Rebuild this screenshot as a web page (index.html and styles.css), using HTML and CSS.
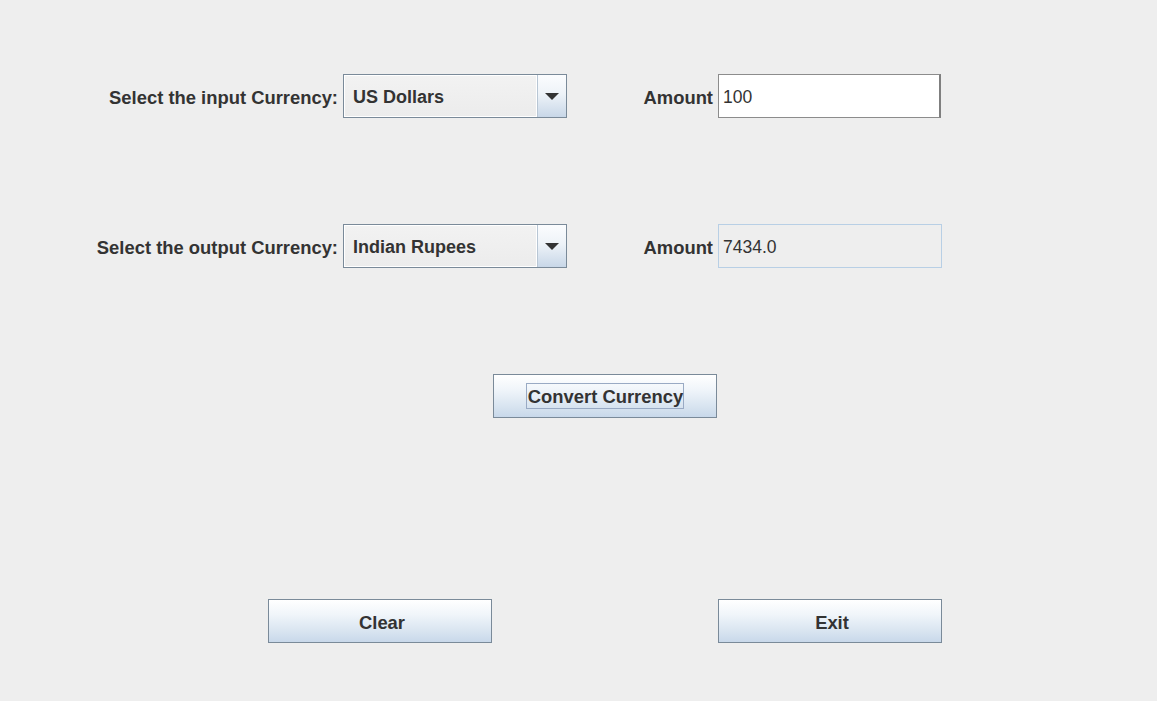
FILE: index.html
```html
<!DOCTYPE html>
<html>
<head>
<meta charset="utf-8">
<link rel="stylesheet" href="styles.css">
</head>
<body>
<div class="frame">
  <div class="row row-first">
    <div class="label label-main">Select the input Currency:</div>
    <div class="combo">
      <div class="combo-text">US Dollars</div>
      <div class="combo-arrow"><svg width="14" height="8" viewBox="0 0 14 8"><path d="M0 0H14L7 7Z" fill="#333"/></svg></div>
    </div>
    <div class="label label-amount">Amount</div>
    <div class="field field-edit">100</div>
  </div>
  <div class="row row-gap">
    <div class="label label-main">Select the output Currency:</div>
    <div class="combo">
      <div class="combo-text">Indian Rupees</div>
      <div class="combo-arrow"><svg width="14" height="8" viewBox="0 0 14 8"><path d="M0 0H14L7 7Z" fill="#333"/></svg></div>
    </div>
    <div class="label label-amount">Amount</div>
    <div class="field field-readonly">7434.0</div>
  </div>
  <div class="row row-gap row-convert">
    <button class="btn"><span class="focus">Convert Currency</span></button>
  </div>
  <div class="row row-bottom">
    <button class="btn btn-clear"><span class="btn-label">Clear</span></button>
    <button class="btn btn-exit"><span class="btn-label">Exit</span></button>
  </div>
</div>
</body>
</html>
```
FILE: styles.css
```css
html, body {
  margin: 0;
  padding: 0;
  background: #eeeeee;
}
body {
  width: 1157px;
  height: 701px;
  overflow: hidden;
  font-family: "Liberation Sans", Arial, sans-serif;
  font-weight: bold;
  font-size: 18.4px;
  color: #333333;
}
.frame {
  padding-top: 74px;
}
.row {
  display: flex;
  align-items: center;
  height: 44px;
}
.row-gap {
  margin-top: 106px;
}
.row-bottom {
  margin-top: 181px;
}
.label-main {
  width: 338px;
  text-align: right;
  margin-right: 5px;
  padding-top: 4px;
}
.label-amount {
  width: 146px;
  text-align: right;
  margin-right: 5px;
  padding-top: 4px;
}
.combo {
  box-sizing: border-box;
  width: 224px;
  height: 44px;
  border: 1px solid #7a8a99;
  display: flex;
  background: #eeeeee;
}
.combo-text {
  flex: 1;
  box-sizing: border-box;
  border: 1px solid #ffffff;
  padding-left: 8px;
  padding-top: 2px;
  display: flex;
  align-items: center;
  background: linear-gradient(#f2f2f2, #ececec);
  font-size: 18px;
}
.combo-arrow {
  width: 28px;
  border-left: 1px solid #b8c6d4;
  background: linear-gradient(#fbfcfe 0%, #eef3f8 45%, #c8d7e8 100%);
  display: flex;
  align-items: center;
  justify-content: center;
}
.combo-arrow svg {
  display: block;
  margin-top: 1px;
}
.field {
  box-sizing: border-box;
  width: 224px;
  height: 44px;
  padding-left: 4px;
  padding-top: 3px;
  display: flex;
  align-items: center;
  font-weight: normal;
  font-size: 17.5px;
}
.field-edit {
  background: #ffffff;
  border: 1px solid #8c8c8c;
  border-right: 2px solid #7f7f7f;
  width: 223px;
}
.field-readonly {
  background: #eeeeee;
  border: 1px solid #b8cfe5;
}
.btn {
  box-sizing: border-box;
  width: 224px;
  height: 44px;
  border: 1px solid #7a8a99;
  background: linear-gradient(#ffffff 0%, #f0f5fa 35%, #d8e4f0 75%, #c8d8ea 100%);
  font-family: "Liberation Sans", Arial, sans-serif;
  font-weight: bold;
  font-size: 18.4px;
  color: #333333;
  padding: 0;
  display: flex;
  align-items: center;
  justify-content: center;
}
.row-convert .btn {
  margin-left: 493px;
}
.focus {
  border: 1px solid #99aac4;
  padding: 4px 0 2px 1px;
  line-height: 18px;
}
.btn-label {
  padding-top: 4px;
  padding-left: 4px;
}
.btn-clear {
  margin-left: 268px;
}
.btn-exit {
  margin-left: 226px;
}
```
